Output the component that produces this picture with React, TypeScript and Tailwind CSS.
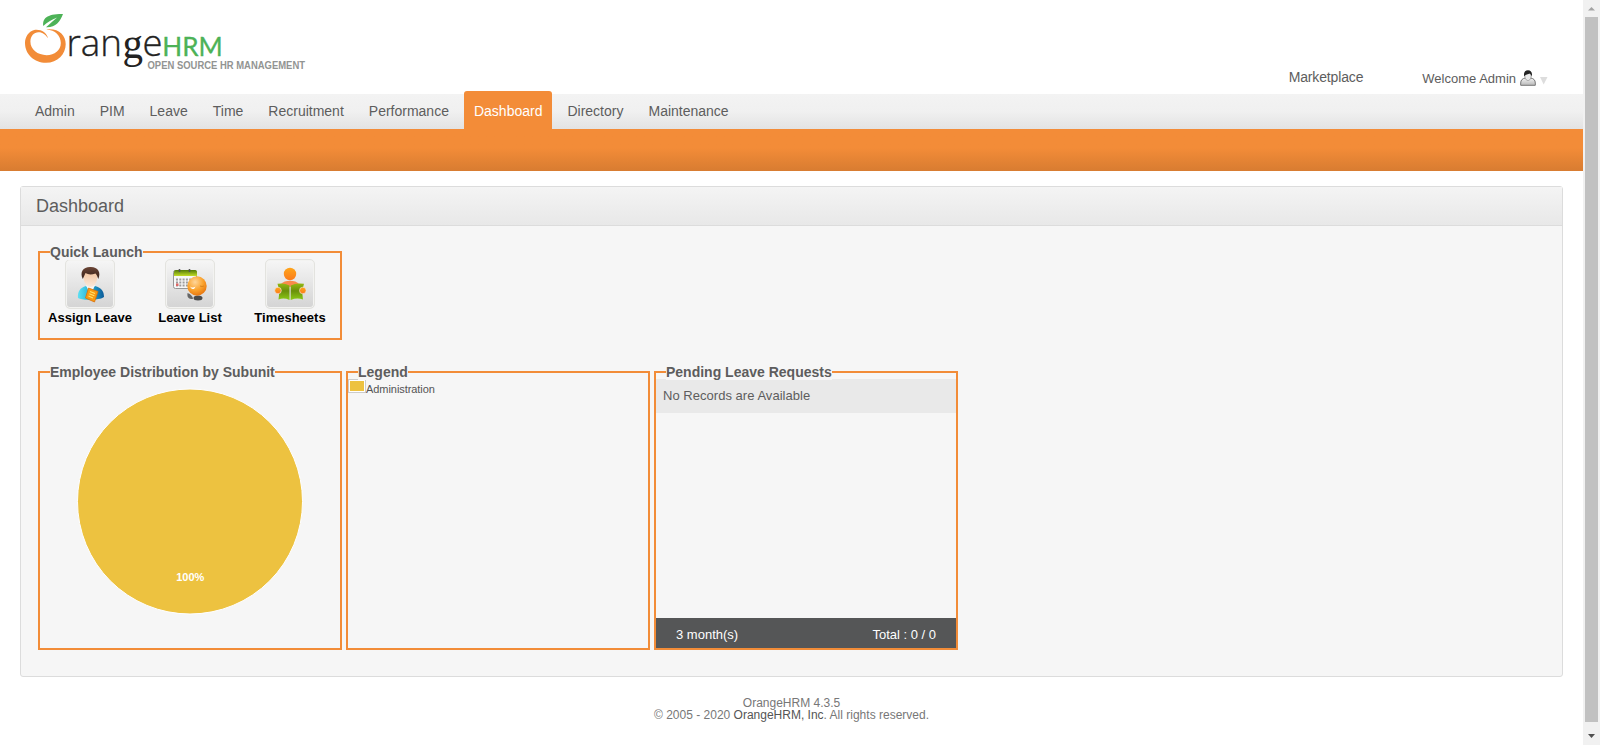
import type { ReactNode } from "react";

function Logo() {
  return (
    <svg width="320" height="94" viewBox="0 0 320 94" className="block" role="img" aria-label="OrangeHRM">
      <path
        fill="#f28c38"
        d="M48 38.2C46.6 32.6 41 29 34.2 30C28.5 31.5 25 37 25 43C25 54.5 34.5 62.8 46 62.8C57.6 62.8 65.7 54 65.7 44.2C65.7 34.6 58.4 28 46.3 29.4C55.5 30 60.8 35.600 60.800 43C60.800 50.4 54.6 55.200 46.6 55.200C37.6 55.200 30.400 49.6 30.400 41.6C30.400 35.800 34 32.400 38.4 32.200C42.6 32.100 45.4 34.600 48 38.2Z"
      />
      <path fill="#4db257" d="M43.3 26C42.4 18.6 46.6 13.8 63 14C60 21.6 55.6 27.8 46 27.3C49.4 24 53 20.8 57.2 17.4C51.8 19.8 46.8 22.4 43.3 26Z" />
      <g fontSize="37" fill="#222" stroke="#222" strokeWidth="0.35" fontFamily="'Open Sans', sans-serif" fontWeight="300">
        <text x="66.500" y="56" textLength="55.500" lengthAdjust="spacingAndGlyphs">ran</text>
        <text x="122.500" y="58" fontSize="44" fontWeight="400" strokeWidth="0" fontFamily="'Liberation Serif', serif" textLength="20.500" lengthAdjust="spacingAndGlyphs">g</text>
        <text x="142.500" y="56" textLength="20" lengthAdjust="spacingAndGlyphs">e</text>
      </g>
      <text x="162.300" y="56" fontSize="26.500" fill="#4db257" stroke="#4db257" strokeWidth="0.3" fontFamily="Lato, sans-serif" textLength="60.500" lengthAdjust="spacingAndGlyphs">HRM</text>
      <text x="147.500" y="68.500" fontSize="10" fontWeight="700" fill="#929492" fontFamily="'Liberation Sans', sans-serif" textLength="157.500" lengthAdjust="spacingAndGlyphs">OPEN SOURCE HR MANAGEMENT</text>
    </svg>
  );
}

function UserIcon() {
  return (
    <svg width="16" height="16" viewBox="0 0 16 16" className="block">
      <defs>
        <linearGradient id="body" x1="0" y1="0" x2="0" y2="1">
          <stop offset="0" stopColor="#f4f4f4" />
          <stop offset="1" stopColor="#b9b9b9" />
        </linearGradient>
      </defs>
      <path d="M.7 15.300V13C.7 10 2.500 8.500 5.300 8H10.700C13.500 8.500 15.300 10 15.300 13V15.300Z" fill="url(#body)" stroke="#777" />
      <path d="M4.800 5C4.800 9 6.500 10.500 8 10.500S11.200 9 11.200 5L9.500 3H6.500Z" fill="#e9e9e9" stroke="#888" strokeWidth=".7" />
      <path d="M4.200 6.500C3.400 2.500 5 .2 8 .2S12.600 2.500 11.800 6.500C11.200 5 10.500 4 9.800 3.600C8 4.600 5.800 4.200 4.200 6.500Z" fill="#222" />
    </svg>
  );
}

function AssignIcon() {
  return (
    <svg width="48" height="48" viewBox="0 0 48 48">
      <defs>
        <linearGradient id="shirt"><stop offset="0" stopColor="#5fe0f2" /><stop offset=".45" stopColor="#25b3d8" /><stop offset="1" stopColor="#0d5a98" /></linearGradient>
        <linearGradient id="hair" x1="0" y1="0" x2="0" y2="1"><stop offset="0" stopColor="#6b4535" /><stop offset="1" stopColor="#35201a" /></linearGradient>
        <linearGradient id="skin" x1="0" y1="0" x2="0" y2="1"><stop offset="0" stopColor="#f0bf98" /><stop offset="1" stopColor="#fbe9da" /></linearGradient>
      </defs>
      <path d="M12 38C11.500 31 14 28 20 26L24 30L29 26C35.500 28 38 31 38 37C35 40 16 41 12 38Z" fill="url(#shirt)" />
      <path d="M20 25L24.500 36L29 25Z" fill="#f5f8fa" />
      <path d="M17.500 15C17 21 20 27 24.500 27S31.500 21 31.500 15L28 10H20Z" fill="url(#skin)" />
      <path d="M16.800 19C13.500 12 17 7 24 7C31.500 6.500 35.500 12 32.300 19C31.500 17 31 15 29.500 13.500C25 15 22 14.500 19.500 13C18.500 15 17.800 17 16.800 19Z" fill="url(#hair)" />
      <path d="M22.500 28L32 31.500L28.500 42L19.500 38Z" fill="#f79a13" stroke="#d96f08" strokeWidth=".8" />
      <path d="M24 31.500L29 33.500M23.300 33.800L28.300 35.800M22.500 36L27 38" stroke="#ffe36b" strokeWidth="1.100" />
    </svg>
  );
}

function LeaveIcon() {
  return (
    <svg width="48" height="48" viewBox="0 0 48 48">
      <defs>
        <linearGradient id="cal" x1="0" y1="0" x2="0" y2="1"><stop offset="0" stopColor="#527a06" /><stop offset="1" stopColor="#c3dd28" /></linearGradient>
        <radialGradient id="ball" cx=".4" cy=".3" r=".7"><stop offset="0" stopColor="#ffd69a" /><stop offset=".6" stopColor="#faa22c" /><stop offset="1" stopColor="#e87811" /></radialGradient>
      </defs>
      <rect x="7.500" y="10.500" width="23" height="18" rx="2" fill="#f7f7f7" stroke="#969696" />
      <path d="M8 16V12Q8 10 10 10H29Q31 10 31 12V16Z" fill="url(#cal)" />
      <path d="M13.500 9V12M23.500 9V12" stroke="#555" strokeWidth="1.600" />
      <path d="M10 19.500H28M10 22.500H28M10 25.500H23" stroke="#9b9b9b" strokeWidth="1.800" strokeDasharray="2 1.300" />
      <rect x="10" y="23.500" width="2.500" height="2.500" fill="#d66" />
      <path d="M21.500 33C25 34 27 37 27 39C22 39 21 37 21.500 33Z" fill="#666" />
      <ellipse cx="32" cy="38" rx="4.500" ry="2.500" fill="#4b4b4b" />
      <circle cx="31" cy="26" r="9.700" fill="url(#ball)" />
      <path d="M24 26C25 28 28 28 29.500 26.500C28.500 30 25 30 24 26Z" fill="#fff" />
      <path d="M34 26Q36 27 38 26" stroke="#d8821d" fill="none" />
    </svg>
  );
}

function TimesheetIcon() {
  return (
    <svg width="48" height="48" viewBox="0 0 48 48">
      <defs>
        <linearGradient id="org" x1="0" y1="0" x2="0" y2="1"><stop offset="0" stopColor="#ffa51a" /><stop offset="1" stopColor="#fb7b1c" /></linearGradient>
        <linearGradient id="book" x1="0" y1="0" x2="0" y2="1"><stop offset="0" stopColor="#94b912" /><stop offset=".45" stopColor="#6a8f0b" /><stop offset="1" stopColor="#8bcb16" /></linearGradient>
      </defs>
      <circle cx="24" cy="14" r="6.200" fill="url(#org)" />
      <path d="M15 24C18 19.500 30 19.500 33 24L24 27Z" fill="#f98a4b" />
      <path d="M11.500 23.800Q18 22.500 23.500 25.500V40Q18 37.500 12.500 39.500Q14 31.500 11.500 23.800ZM38 23.800Q30 22.500 24.700 25.500V40Q31 37.500 37 39.500Q35.500 31.500 38 23.800Z" fill="url(#book)" />
      <circle cx="12" cy="30.500" r="3.300" fill="url(#org)" stroke="#eee" strokeWidth=".6" />
      <circle cx="36.800" cy="30.500" r="3.300" fill="url(#org)" stroke="#eee" strokeWidth=".6" />
    </svg>
  );
}

const menu = ["Admin", "PIM", "Leave", "Time", "Recruitment", "Performance", "Dashboard", "Directory", "Maintenance"];

const shortcuts = [
  { label: "Assign Leave", icon: <AssignIcon /> },
  { label: "Leave List", icon: <LeaveIcon /> },
  { label: "Timesheets", icon: <TimesheetIcon /> },
];

function Group({ title, height, children }: { title: string; height: string; children?: ReactNode }) {
  return (
    <section className={`relative w-[304px] border-2 border-[#f28c38] ${height}`}>
      <h2 className="absolute -top-[9px] left-[10px] bg-[#f6f6f6] text-[14px] leading-4 font-bold whitespace-nowrap">{title}</h2>
      {children}
    </section>
  );
}

export default function App() {
  return (
    <div className="flex h-[745px] w-[1600px] overflow-hidden bg-white font-['Liberation_Sans',Arial,sans-serif] text-[#5d5d5d]">
      <div className="flex w-[1583px] flex-col">
        <header className="flex h-[94px] justify-between">
          <Logo />
          <div className="flex items-start pt-[69px] pr-[35px]">
            <a className="mr-[59px] text-[14px] leading-4 tracking-[-0.15px]">Marketplace</a>
            <div className="flex items-start">
              <span className="mt-0.5 mr-1 text-[13px] leading-[15px]">Welcome Admin</span>
              <span className="mt-px">
                <UserIcon />
              </span>
              <svg width="8" height="8" viewBox="0 0 8 8" className="mt-2 ml-1">
                <path d="M0 0H7.500L3.700 7.500Z" fill="#ddd" />
              </svg>
            </div>
          </div>
        </header>

        <nav className="flex h-[35px] gap-[5px] bg-linear-to-b from-[#f3f3f3] via-[#f0f0f0] to-[#e3e3e3] pl-[25px] text-[14px] leading-4">
          {menu.map((item) =>
            item === "Dashboard" ? (
              <a key={item} className="-mt-[3px] h-[38px] rounded-t-[3px] bg-[#f38c38] px-2.5 pt-3 text-white">{item}</a>
            ) : (
              <a key={item} className="px-2.5 pt-[9px]">{item}</a>
            ),
          )}
        </nav>
        <div className="h-[42px] bg-linear-to-b from-[#f38c38] from-45% to-[#d87c31]" />

        <main className="mx-5 mt-[15px] h-[491px] rounded-[3px] border border-[#dcdcdc] bg-[#f6f6f6]">
          <h1 className="h-[39px] border-b border-[#dcdcdc] bg-linear-to-b from-[#f4f4f4] to-[#e8e8e8] pt-[9px] pl-[15px] text-[18px] leading-5">Dashboard</h1>
          <div className="flex flex-col gap-[31px] pt-[25px] pl-[17px]">
            <Group title="Quick Launch" height="h-[89px]">
              <div className="flex pt-1.5">
                {shortcuts.map((s) => (
                  <div key={s.label} className="flex w-[100px] flex-col items-center">
                    <div className="size-[50px] rounded-[5px] border border-[#e3e3df] bg-linear-to-b from-[#f6f6f6] to-[#d4d4d4] shadow-[inset_0_0_0_1px_#f3f3f1]">{s.icon}</div>
                    <span className="mt-px text-[13px] leading-[15px] font-bold whitespace-nowrap text-black">{s.label}</span>
                  </div>
                ))}
              </div>
            </Group>
            <div className="flex gap-1">
              <Group title="Employee Distribution by Subunit" height="h-[279px]">
                <svg width="300" height="275" viewBox="0 0 300 275" className="block">
                  <circle cx="150" cy="128.500" r="112.500" fill="#edc240" stroke="#fff" strokeWidth="1" />
                  <text x="150.300" y="208" textAnchor="middle" fontSize="11" fontWeight="700" fill="#fff">100%</text>
                </svg>
              </Group>
              <Group title="Legend" height="h-[279px]">
                <div className="flex pt-1.5">
                  <div className="h-3.5 w-[18px] border border-[#ccc] bg-white p-px">
                    <div className="h-full bg-[#edc240]" />
                  </div>
                  <span className="mt-1 text-[11px] leading-3 tracking-[-0.06px] text-[#545454]">Administration</span>
                </div>
              </Group>
              <Group title="Pending Leave Requests" height="h-[279px]">
                <div className="flex h-full flex-col justify-between pt-1.5">
                  <p className="h-[34px] bg-[#e9e9e9] pt-[9px] pl-[7px] text-[13px] leading-[15px] tracking-[0.03px]">No Records are Available</p>
                  <div className="flex h-[30px] justify-between bg-[#555657] px-5 pt-[9px] text-[13px] leading-[15px] text-white">
                    <span>3 month(s)</span>
                    <span>Total : 0 / 0</span>
                  </div>
                </div>
              </Group>
            </div>
          </div>
        </main>

        <footer className="pt-5 text-center text-[12px] leading-3 text-[#777]">
          OrangeHRM 4.3.5
          <br />© 2005 - 2020 <a className="text-[#555]">OrangeHRM, Inc</a>. All rights reserved.
        </footer>
      </div>

      <div className="flex w-[17px] flex-col items-center justify-between bg-[#f1f1f1]">
        <svg width="17" height="17" viewBox="0 0 17 17">
          <path d="M5 10.500H12L8.500 7Z" fill="#a3a3a3" />
        </svg>
        <div className="w-[13px] flex-1 bg-[#c1c1c1]" />
        <svg width="17" height="23" viewBox="0 0 17 23">
          <path d="M5 12H12L8.500 16Z" fill="#505050" />
        </svg>
      </div>
    </div>
  );
}
